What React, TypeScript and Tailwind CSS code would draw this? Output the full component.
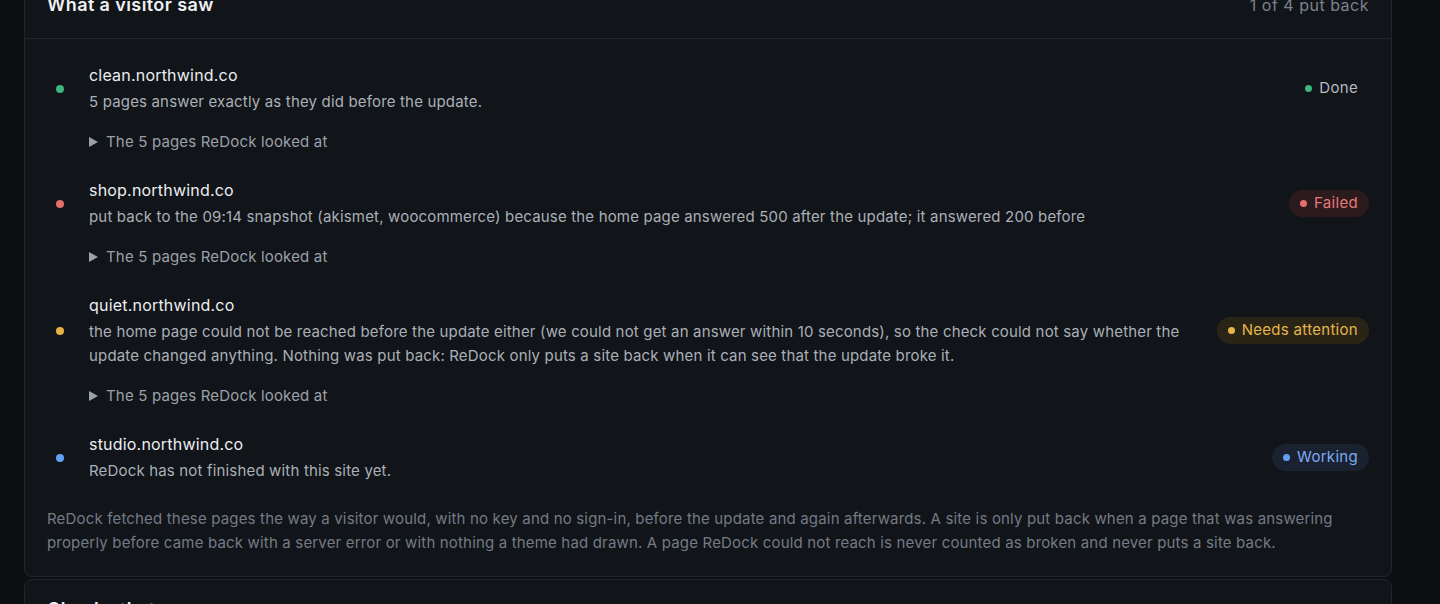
type Status = "done" | "failed" | "attention" | "working";

type Site = {
  host: string;
  note: string;
  status: Status;
  pages?: number;
};

const sites: Site[] = [
  {
    host: "clean.northwind.co",
    note: "5 pages answer exactly as they did before the update.",
    status: "done",
    pages: 5,
  },
  {
    host: "shop.northwind.co",
    note: "put back to the 09:14 snapshot (akismet, woocommerce) because the home page answered 500 after the update; it answered 200 before",
    status: "failed",
    pages: 5,
  },
  {
    host: "quiet.northwind.co",
    note: "the home page could not be reached before the update either (we could not get an answer within 10 seconds), so the check could not say whether the update changed anything. Nothing was put back: ReDock only puts a site back when it can see that the update broke it.",
    status: "attention",
    pages: 5,
  },
  {
    host: "studio.northwind.co",
    note: "ReDock has not finished with this site yet.",
    status: "working",
  },
];

const dotColor: Record<Status, string> = {
  done: "bg-[#3fb47c]",
  failed: "bg-[#e46f6d]",
  attention: "bg-[#e5b443]",
  working: "bg-[#61a0f2]",
};

const badgeStyle: Record<Status, string> = {
  done: "text-[#b4bac1]",
  failed: "bg-[#2c1b1e] text-[#e67a77]",
  attention: "bg-[#2a2417] text-[#e4b54c]",
  working: "bg-[#1a2231] text-[#7eaaf2]",
};

const badgeLabel: Record<Status, string> = {
  done: "Done",
  failed: "Failed",
  attention: "Needs attention",
  working: "Working",
};

function Badge({ status }: { status: Status }) {
  return (
    <span
      className={`ml-6 inline-flex h-[27px] shrink-0 items-center gap-[7px] rounded-full px-[11px] text-[15px] tracking-[0.3px] ${badgeStyle[status]}`}
    >
      <span className={`size-[7px] rounded-full ${dotColor[status]}`} />
      {badgeLabel[status]}
    </span>
  );
}

function SiteRow({ site }: { site: Site }) {
  return (
    <li>
      <div className="flex items-center">
        <span
          className={`ml-[9px] mr-[25px] size-2 shrink-0 rounded-full ${dotColor[site.status]}`}
        />
        <div className="min-w-0 flex-1">
          <p className="text-[16px] leading-6 tracking-[0.2px] text-[#eceef1]">
            {site.host}
          </p>
          <p className="mt-[3px] text-[15px] leading-6 tracking-[0.17px] text-[#aab0b7]">
            {site.note}
          </p>
        </div>
        <Badge status={site.status} />
      </div>
      {site.pages ? (
        <div className="mt-4 flex items-center gap-2 pl-[42px] text-[15px] leading-6 tracking-[0.17px] text-[#9ba1a9]">
          <svg width="9" height="10" viewBox="0 0 9 10" aria-hidden>
            <polygon points="0,0 9,5 0,10" fill="#9ba1a9" />
          </svg>
          The {site.pages} pages ReDock looked at
        </div>
      ) : null}
    </li>
  );
}

export default function App() {
  return (
    <div
      className="h-[604px] overflow-hidden bg-[#0c0e11] pl-6 pr-12"
      style={{ fontFamily: "Inter, 'Noto Sans', sans-serif" }}
    >
      <section className="-mt-[29px] rounded-lg border border-[#22262c] bg-[#111419]">
        <header className="flex items-center justify-between border-b border-[#22262c] px-[22px] py-[21px]">
          <h2 className="text-[18px] leading-6 font-semibold tracking-[0.4px] text-[#eef0f2]">
            What a visitor saw
          </h2>
          <span className="text-[16px] leading-6 tracking-[0.5px] text-[#7c838c]">
            1 of 4 put back
          </span>
        </header>

        <div className="px-[22px] pt-6 pb-[21px]">
          <ul className="space-y-6">
            {sites.map((site) => (
              <SiteRow key={site.host} site={site} />
            ))}
          </ul>
          <p className="mt-6 text-[15px] leading-6 tracking-[0.17px] text-[#747b84]">
            ReDock fetched these pages the way a visitor would, with no key and
            no sign-in, before the update and again afterwards. A site is only
            put back when a page that was answering properly before came back
            with a server error or with nothing a theme had drawn. A page ReDock
            could not reach is never counted as broken and never puts a site
            back.
          </p>
        </div>
      </section>

      <section className="mt-[2px] rounded-lg border border-[#22262c] bg-[#111419] px-[22px] pt-[18px] pb-5">
        <h2 className="text-[18px] leading-6 font-semibold tracking-[0.4px] text-[#eef0f2]">
          Checks that ran
        </h2>
      </section>
    </div>
  );
}
